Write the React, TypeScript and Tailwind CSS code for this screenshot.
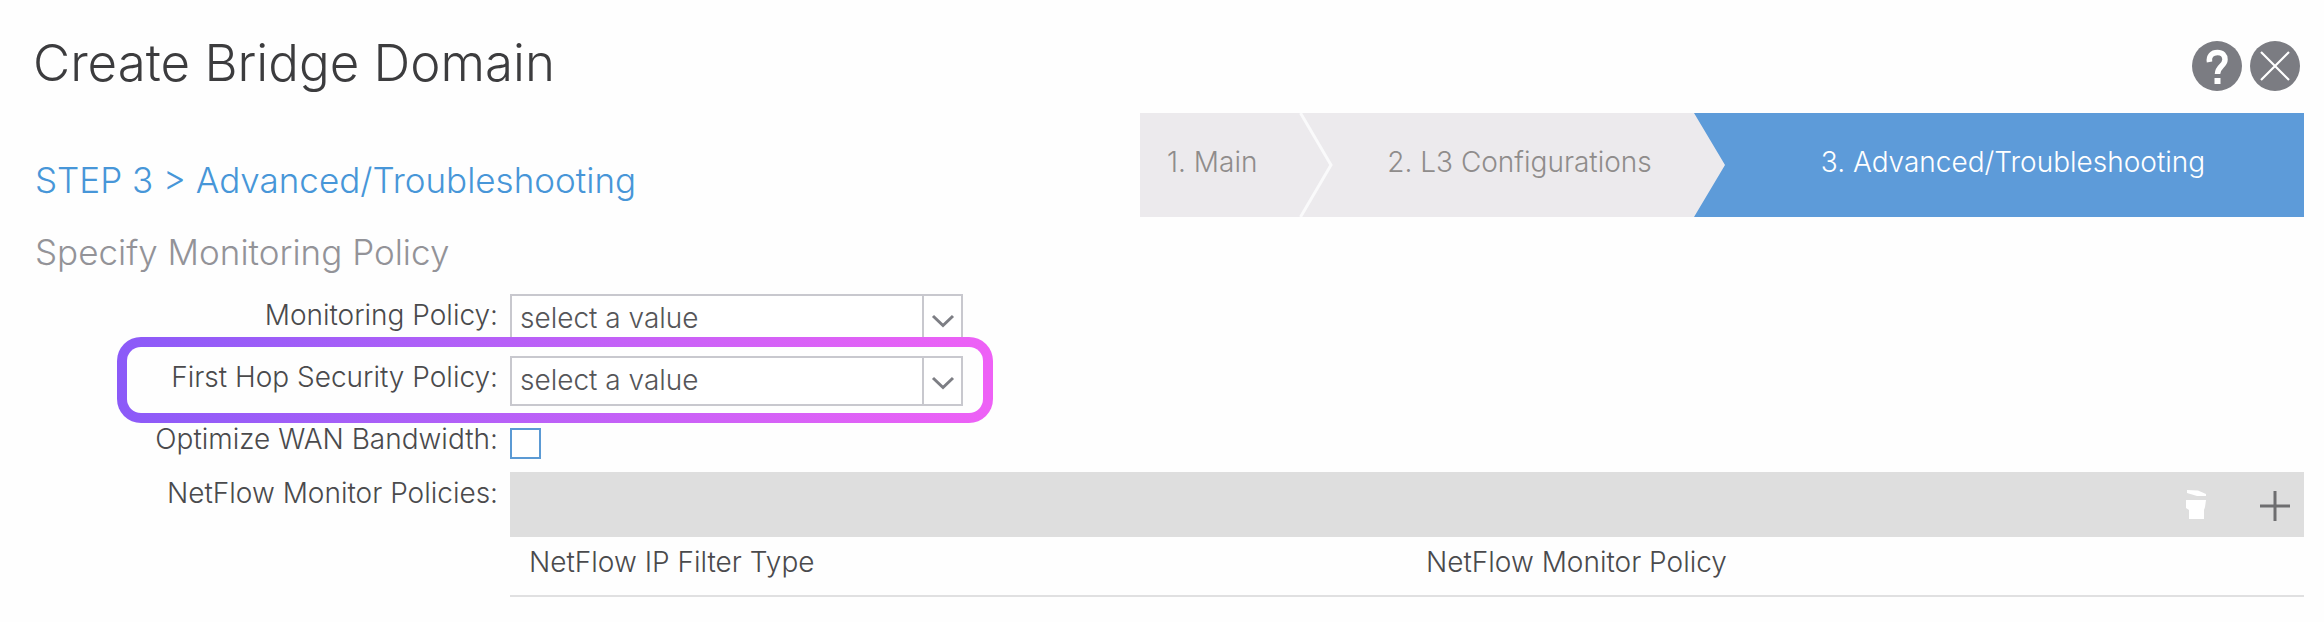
import { ReactNode } from "react";

function Label({ htmlFor, children }: { htmlFor: string; children: ReactNode }) {
  return (
    <label htmlFor={htmlFor} className="w-[500px] shrink-0 pt-px pr-[2px] text-right text-[28px] leading-[40px] whitespace-nowrap text-[#4a4a4c]">
      {children}
    </label>
  );
}

function SelectBox({ id }: { id: string }) {
  return (
    <div className="relative h-[50px] w-[453px]">
      <select
        id={id}
        className="h-full w-full appearance-none rounded-none border-2 border-[#c8c8ce] bg-white pr-10 pb-[3px] pl-[8px] text-[28px] font-light text-[#555558]"
      >
        <option>select a value</option>
      </select>
      <span className="pointer-events-none absolute inset-y-0 right-0 flex w-[41px] items-center justify-center border-l-2 border-[#c8c8ce] pt-[3px] pr-[2px]">
        <svg width="24" height="14" viewBox="0 0 24 14" fill="none" stroke="#7d7e84" strokeWidth="3">
          <path d="M2 2 L12 11.5 L22 2" />
        </svg>
      </span>
    </div>
  );
}

export default function App() {
  return (
    <main className="min-h-screen bg-[#fefefe] pr-5 pb-5 font-['Inter',sans-serif] font-light">
      <header className="flex h-[113px] items-start justify-between pt-[33px] pr-1 pl-[33px]">
        <h1 className="text-[51px] leading-[60px] whitespace-nowrap text-[#3c3c3e]">Create Bridge Domain</h1>
        <div className="flex gap-2 pt-[8px]">
          <button type="button" aria-label="Help" className="size-[50px] rounded-full bg-[#7b7c82]">
            <svg viewBox="0 0 50 50" fill="none" className="size-full">
              <path d="M17.500 21 C16.500 15 20 11.500 25.500 11.500 C30.500 11.500 33 14.500 33 18.500 C33 25 25.500 25 25.500 33" stroke="white" strokeWidth="5.500" />
              <rect x="22.500" y="37" width="6" height="6" fill="white" />
            </svg>
          </button>
          <button type="button" aria-label="Close" className="size-[50px] rounded-full bg-[#7b7c82]">
            <svg viewBox="0 0 50 50" fill="none" stroke="white" strokeWidth="2.200" className="size-full">
              <path d="M11 11 L39 39 M39 11 L11 39" />
            </svg>
          </button>
        </div>
      </header>

      <section className="grid grid-cols-[1140fr_1164fr]">
        <div className="pl-[35px]">
          <h2 className="pt-[46px] text-[35px] leading-[42px] whitespace-nowrap text-[#4796d8]">
            STEP 3 &gt; Advanced/Troubleshooting
          </h2>
          <p className="pt-[30px] text-[35px] leading-[42px] whitespace-nowrap text-[#939398]">Specify Monitoring Policy</p>
        </div>
        <nav aria-label="Steps" className="h-[104px]">
          <ol className="grid h-full grid-cols-[159fr_395fr_610fr] bg-[#eceaed] text-[28px] whitespace-nowrap text-[#8f8c8b]">
            <li className="flex items-center pb-[6px] pl-[27px]">1. Main</li>
            <li className="flex items-center">
              <svg width="34" height="104" viewBox="0 0 34 104" fill="none" stroke="#fafafb" strokeWidth="3">
                <path d="M1.500 0 L32 52 L1.500 104" />
              </svg>
              <span className="flex-1 pb-[6px] pl-3 text-center">2. L3 Configurations</span>
            </li>
            <li
              aria-current="step"
              className="flex items-center justify-center bg-[#5d9bd9] pb-[6px] pl-[28px] text-white [clip-path:polygon(0_0,100%_0,100%_100%,0_100%,31px_50%)]"
            >
              3. Advanced/Troubleshooting
            </li>
          </ol>
        </nav>
      </section>

      <form className="flex flex-col pt-[21px]">
        <div className="flex gap-[10px]">
          <Label htmlFor="monitoring">Monitoring Policy:</Label>
          <SelectBox id="monitoring" />
        </div>

        <div className="relative mt-3">
          <div className="absolute -top-[19px] -bottom-[17px] left-[117px] w-[876px] rounded-[24px] bg-linear-to-r from-[#8b5af8] to-[#ee61f6] p-[10px]">
            <div className="h-full rounded-[14px] bg-[#fefefe]" />
          </div>
          <div className="relative flex gap-[10px]">
            <Label htmlFor="security">First Hop Security Policy:</Label>
            <SelectBox id="security" />
          </div>
        </div>

        <div className="mt-3 flex gap-[10px]">
          <Label htmlFor="wan">Optimize WAN Bandwidth:</Label>
          <input id="wan" type="checkbox" className="mt-[10px] size-[31px] appearance-none border-2 border-[#5b9ad4] bg-white" />
        </div>

        <div className="mt-[13px] flex gap-[10px]">
          <Label htmlFor="netflow">NetFlow Monitor Policies:</Label>
          <div className="flex-1">
            <div className="flex h-[65px] items-center justify-end gap-[30px] bg-[#dedede] pt-[2px] pr-[5px]">
              <button type="button" aria-label="Delete" className="flex w-[48px] justify-center pb-[2px]">
                <svg width="22" height="32" viewBox="0 0 22 32" fill="white">
                  <path d="M1 1 L12 1.500 L20 5 V7 H11 L1 4 Z" />
                  <path d="M0 11 H20 L19 18 L18 21 V30 H3 V21 L0 19 Z" />
                </svg>
              </button>
              <button id="netflow" type="button" aria-label="Add" className="flex w-[48px] justify-center">
                <svg width="30" height="30" viewBox="0 0 30 30" stroke="#6e6e70" strokeWidth="3">
                  <path d="M15 0 V30 M0 15 H30" />
                </svg>
              </button>
            </div>
            <table className="w-full table-fixed border-b-2 border-[#e0e0e1] text-left text-[28px] leading-[40px] text-[#4a4a4c]">
              <thead>
                <tr>
                  <th className="pt-[5px] pb-[13px] pl-[19px] font-light">NetFlow IP Filter Type</th>
                  <th className="pt-[5px] pb-[13px] pl-[19px] font-light">NetFlow Monitor Policy</th>
                </tr>
              </thead>
            </table>
          </div>
        </div>
      </form>
    </main>
  );
}
